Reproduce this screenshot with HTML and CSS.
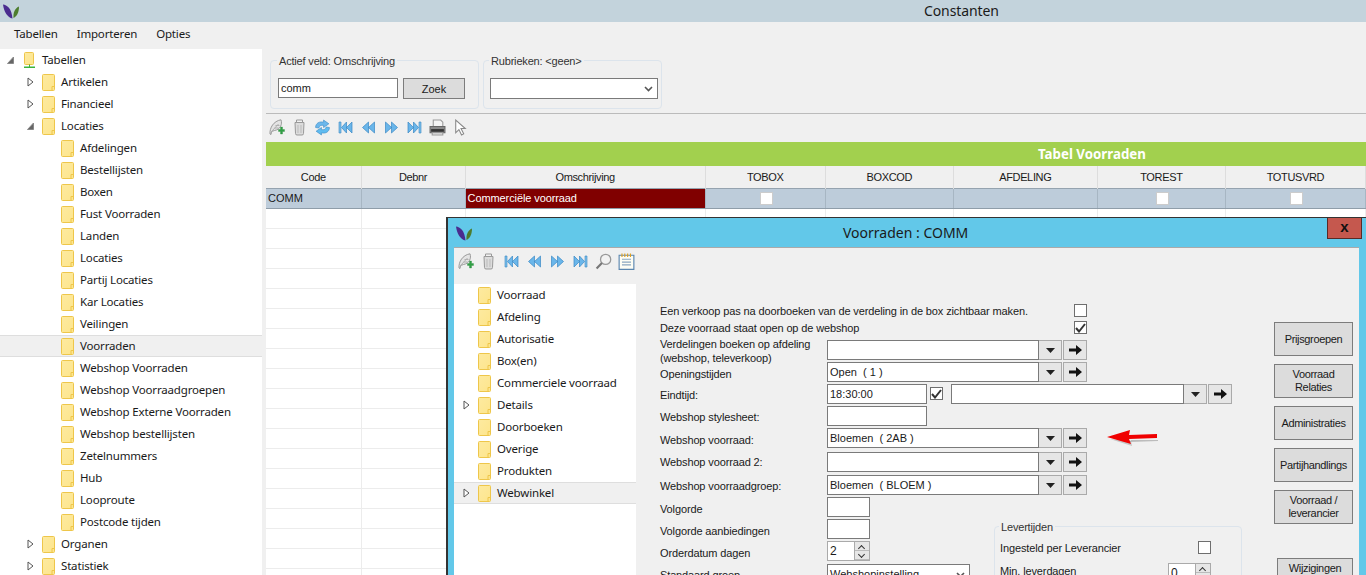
FILE: index.html
```html
<!DOCTYPE html>
<html lang="en">
<head>
    <meta charset="UTF-8">
    <meta name="viewport" content="width=device-width, initial-scale=1.0">
    <title>Constanten</title>
    <link rel="stylesheet" href="styles.css">
</head>
<body>
    <svg class="defs" width="0" height="0">
        <defs>
            <linearGradient id="folder-fill" x1="0" y1="0" x2="1" y2="1">
                <stop offset="0" stop-color="#fdeaa0"/>
                <stop offset="1" stop-color="#fde58c"/>
            </linearGradient>
            <symbol id="i-logo" viewBox="0 0 18 16">
                <path d="M1 1.500C5 2 9.500 5 10.500 15.500C5.500 14.500 2 9 1 1.500Z" fill="#4a2c8f"/>
                <path d="M17 3.500C17 9 15 13.500 11.500 15C11 10 12.500 5.500 17 3.500Z" fill="#4d7d2e"/>
            </symbol>
            <symbol id="i-folder" viewBox="0 0 13 17">
                <path d="M.5 1.500a1 1 0 0 1 1-1h10a1 1 0 0 1 1 1v14a1 1 0 0 1-1 1h-10a1 1 0 0 1-1-1z" fill="url(#folder-fill)" stroke="#eec64a"/>
                <path d="M10 16.500v-4h2.500" fill="none" stroke="#eec64a"/>
            </symbol>
            <symbol id="i-root" viewBox="0 0 13 17">
                <path d="M2.500 .5h7a1 1 0 0 1 1 1v10a1 1 0 0 1-1 1h-7a1 1 0 0 1-1-1v-10a1 1 0 0 1 1-1z" fill="url(#folder-fill)" stroke="#eec64a"/>
                <path d="M6 12.500h1v2h5v1.500h-11v-1.500h5z" fill="#3cb43c"/>
            </symbol>
            <symbol id="i-closed" viewBox="0 0 7 10">
                <path d="M1 1l5 4-5 4z" fill="#fff" stroke="#555"/>
            </symbol>
            <symbol id="i-open" viewBox="0 0 7 10">
                <path d="M6.500 2v6.500h-6z" fill="#666" stroke="#888"/>
            </symbol>
            <symbol id="i-quill" viewBox="0 0 16 17">
                <path d="M1.500 15C1 9 5 2 12.500 .8C14 5 12 10.500 6 11.500L3 12.500L2.500 15.500z" fill="#e4e4e4" stroke="#9a9a9a"/>
                <path d="M3 12.500L10 5M6 9h4M7 6.500h4" stroke="#b0b0b0" fill="none"/>
                <path d="M10 10.500h2v-2.500h2v2.500h2v2h-2v2.500h-2v-2.500h-2z" fill="#2fa044" stroke="#1d7a30" stroke-width=".3"/>
            </symbol>
            <symbol id="i-trash" viewBox="0 0 16 17">
                <path d="M3.500 3.500h9l-.5 11a1.500 1.500 0 0 1-1.500 1.500h-5a1.500 1.500 0 0 1-1.500-1.500z" fill="#dcdcdc" stroke="#999"/>
                <path d="M5 1h6v2.500h-6z" fill="#f2f2f2" stroke="#999"/>
                <path d="M6.500 6v8M9.500 6v8" stroke="#bbb"/>
            </symbol>
            <symbol id="i-refresh" viewBox="0 0 16 16">
                <path d="M1.500 8C1.500 4 5 2 9 3V1l5 3.500L9 8V6C6.500 5.500 5 6.500 4.500 8.500z" fill="#6cb8ec" stroke="#3d8cc8" stroke-width=".6"/>
                <path d="M14.500 8C14.500 12 11 14 7 13v2l-5-3.500L7 8v2C9.500 10.500 11 9.500 11.500 7.500z" fill="#5fbcf0" stroke="#3d8cc8" stroke-width=".6"/>
            </symbol>
            <symbol id="i-first" viewBox="0 0 14 13">
                <path d="M.5 1h2v11h-2z" fill="#7cc0ec" stroke="#3a88c4" stroke-width=".6"/>
                <path d="M8 1v11l-5-5.500zM13.500 1v11l-5.500-5.500z" fill="#6ab6ea" stroke="#3a88c4" stroke-width=".7"/>
            </symbol>
            <symbol id="i-prev" viewBox="0 0 14 13">
                <path d="M7 1v11L1 6.500zM13 1v11L7 6.500z" fill="#6ab6ea" stroke="#3a88c4" stroke-width=".7"/>
            </symbol>
            <symbol id="i-next" viewBox="0 0 14 13">
                <path d="M1 1v11l6-5.500zM7 1v11l6-5.500z" fill="#6ab6ea" stroke="#3a88c4" stroke-width=".7"/>
            </symbol>
            <symbol id="i-last" viewBox="0 0 14 13">
                <path d="M.5 1v11l5.500-5.500zM6 1v11l5-5.500z" fill="#6ab6ea" stroke="#3a88c4" stroke-width=".7"/>
                <path d="M11.500 1h2v11h-2z" fill="#7cc0ec" stroke="#3a88c4" stroke-width=".6"/>
            </symbol>
            <symbol id="i-print" viewBox="0 0 16 16">
                <path d="M4 1h7l2 2v4h-9z" fill="#f4f4f4" stroke="#999"/>
                <path d="M1 7h14v6h-14z" fill="#8a8a8a" stroke="#666"/>
                <path d="M2 9.500h12v2.500h-12z" fill="#333"/>
                <path d="M3 13h10v2h-10z" fill="#e4e4e4" stroke="#999"/>
            </symbol>
            <symbol id="i-cursor" viewBox="0 0 12 16">
                <path d="M1.500 1v12l3-3 2.500 5 2-1-2.500-5h4z" fill="#fff" stroke="#888"/>
            </symbol>
            <symbol id="i-search" viewBox="0 0 16 16">
                <circle cx="10" cy="6" r="4.800" fill="#f2f2f2" stroke="#999" stroke-width="1.200"/>
                <path d="M6.500 9.500L1.500 14.500" stroke="#777" stroke-width="2"/>
            </symbol>
            <symbol id="i-notes" viewBox="0 0 14 15">
                <path d="M.5 2h13v12.500h-13z" fill="#fdfdf4" stroke="#5a86b0"/>
                <path d="M3 5.500h8M3 8h8M3 10.500h8" stroke="#8aa6c0"/>
                <path d="M3 .5v3M5.500 .5v3M8 .5v3M10.500 .5v3" stroke="#e0a020"/>
            </symbol>
            <symbol id="i-drop" viewBox="0 0 9 5">
                <path d="M0 0h9L4.500 5z" fill="#222"/>
            </symbol>
            <symbol id="i-go" viewBox="0 0 13 10">
                <path d="M0 3.500h7V0l6 5-6 5V6.500H0z" fill="#111"/>
            </symbol>
            <symbol id="i-chev" viewBox="0 0 9 6">
                <path d="M1 1l3.500 3.500L8 1" fill="none" stroke="#555" stroke-width="1.600"/>
            </symbol>
            <symbol id="i-tick" viewBox="0 0 11 10">
                <path d="M1 5l3 3.500L10 1" fill="none" stroke="#333" stroke-width="2"/>
            </symbol>
        </defs>
    </svg>

    <div class="app">
        <header class="titlebar">
            <svg class="logo"><use href="#i-logo"/></svg>
            <span class="titlebar-text">Constanten</span>
        </header>
        <nav class="menubar">
            <a>Tabellen</a>
            <a>Importeren</a>
            <a>Opties</a>
        </nav>

        <div class="main">
            <ul class="tree">
                <li class="node lvl-0"><svg class="exp"><use href="#i-open"/></svg><svg class="folder"><use href="#i-root"/></svg>Tabellen</li>
                <li class="node lvl-1"><svg class="exp"><use href="#i-closed"/></svg><svg class="folder"><use href="#i-folder"/></svg>Artikelen</li>
                <li class="node lvl-1"><svg class="exp"><use href="#i-closed"/></svg><svg class="folder"><use href="#i-folder"/></svg>Financieel</li>
                <li class="node lvl-1"><svg class="exp"><use href="#i-open"/></svg><svg class="folder"><use href="#i-folder"/></svg>Locaties</li>
                <li class="node lvl-2"><svg class="folder"><use href="#i-folder"/></svg>Afdelingen</li>
                <li class="node lvl-2"><svg class="folder"><use href="#i-folder"/></svg>Bestellijsten</li>
                <li class="node lvl-2"><svg class="folder"><use href="#i-folder"/></svg>Boxen</li>
                <li class="node lvl-2"><svg class="folder"><use href="#i-folder"/></svg>Fust Voorraden</li>
                <li class="node lvl-2"><svg class="folder"><use href="#i-folder"/></svg>Landen</li>
                <li class="node lvl-2"><svg class="folder"><use href="#i-folder"/></svg>Locaties</li>
                <li class="node lvl-2"><svg class="folder"><use href="#i-folder"/></svg>Partij Locaties</li>
                <li class="node lvl-2"><svg class="folder"><use href="#i-folder"/></svg>Kar Locaties</li>
                <li class="node lvl-2"><svg class="folder"><use href="#i-folder"/></svg>Veilingen</li>
                <li class="node lvl-2 selected"><svg class="folder"><use href="#i-folder"/></svg>Voorraden</li>
                <li class="node lvl-2"><svg class="folder"><use href="#i-folder"/></svg>Webshop Voorraden</li>
                <li class="node lvl-2"><svg class="folder"><use href="#i-folder"/></svg>Webshop Voorraadgroepen</li>
                <li class="node lvl-2"><svg class="folder"><use href="#i-folder"/></svg>Webshop Externe Voorraden</li>
                <li class="node lvl-2"><svg class="folder"><use href="#i-folder"/></svg>Webshop bestellijsten</li>
                <li class="node lvl-2"><svg class="folder"><use href="#i-folder"/></svg>Zetelnummers</li>
                <li class="node lvl-2"><svg class="folder"><use href="#i-folder"/></svg>Hub</li>
                <li class="node lvl-2"><svg class="folder"><use href="#i-folder"/></svg>Looproute</li>
                <li class="node lvl-2"><svg class="folder"><use href="#i-folder"/></svg>Postcode tijden</li>
                <li class="node lvl-1"><svg class="exp"><use href="#i-closed"/></svg><svg class="folder"><use href="#i-folder"/></svg>Organen</li>
                <li class="node lvl-1"><svg class="exp"><use href="#i-closed"/></svg><svg class="folder"><use href="#i-folder"/></svg>Statistiek</li>
            </ul>

            <section class="content">
                <div class="filters">
                    <fieldset class="group group-search">
                        <legend>Actief veld: Omschrijving</legend>
                        <div class="field-text search-input">comm</div>
                        <button class="btn zoek">Zoek</button>
                    </fieldset>
                    <fieldset class="group group-rubriek">
                        <legend>Rubrieken: &lt;geen&gt;</legend>
                        <div class="field-text select"><svg class="chev"><use href="#i-chev"/></svg></div>
                    </fieldset>
                </div>

                <div class="toolbar main-toolbar">
                    <svg class="tool"><use href="#i-quill"/></svg>
                    <svg class="tool"><use href="#i-trash"/></svg>
                    <svg class="tool"><use href="#i-refresh"/></svg>
                    <svg class="tool nav"><use href="#i-first"/></svg>
                    <svg class="tool nav"><use href="#i-prev"/></svg>
                    <svg class="tool nav"><use href="#i-next"/></svg>
                    <svg class="tool nav"><use href="#i-last"/></svg>
                    <svg class="tool"><use href="#i-print"/></svg>
                    <svg class="tool"><use href="#i-cursor"/></svg>
                </div>

                <div class="band">Tabel Voorraden</div>

                <table class="grid">
                    <colgroup>
                        <col class="c-95"><col class="c-104"><col class="c-240"><col class="c-120"><col class="c-128"><col class="c-144"><col class="c-128"><col class="c-140">
                    </colgroup>
                    <thead>
                        <tr><th>Code</th><th>Debnr</th><th>Omschrijving</th><th>TOBOX</th><th>BOXCOD</th><th>AFDELING</th><th>TOREST</th><th>TOTUSVRD</th></tr>
                    </thead>
                    <tbody>
                        <tr class="current">
                            <td>COMM</td><td></td><td class="active-cell">Commerciële voorraad</td>
                            <td><span class="cell-check"></span></td><td></td><td></td>
                            <td><span class="cell-check"></span></td><td><span class="cell-check"></span></td>
                        </tr>
                        <tr><td></td><td></td><td></td><td></td><td></td><td></td><td></td><td></td></tr>
                        <tr><td></td><td></td></tr>
                        <tr><td></td><td></td></tr>
                        <tr><td></td><td></td></tr>
                        <tr><td></td><td></td></tr>
                        <tr><td></td><td></td></tr>
                        <tr><td></td><td></td></tr>
                        <tr><td></td><td></td></tr>
                        <tr><td></td><td></td></tr>
                        <tr><td></td><td></td></tr>
                        <tr><td></td><td></td></tr>
                        <tr><td></td><td></td></tr>
                        <tr><td></td><td></td></tr>
                        <tr><td></td><td></td></tr>
                        <tr><td></td><td></td></tr>
                        <tr><td></td><td></td></tr>
                        <tr><td></td><td></td></tr>
                        <tr><td></td><td></td></tr>
                        <tr><td></td><td></td></tr>
                    </tbody>
                </table>
            </section>
        </div>

        <div class="dialog">
            <div class="dialog-title">
                <svg class="logo"><use href="#i-logo"/></svg>
                <span class="dialog-title-text">Voorraden : COMM</span>
                <button class="close">x</button>
            </div>
            <div class="dialog-panel">
                <div class="toolbar dialog-toolbar">
                    <svg class="tool"><use href="#i-quill"/></svg>
                    <svg class="tool"><use href="#i-trash"/></svg>
                    <svg class="tool nav"><use href="#i-first"/></svg>
                    <svg class="tool nav"><use href="#i-prev"/></svg>
                    <svg class="tool nav"><use href="#i-next"/></svg>
                    <svg class="tool nav"><use href="#i-last"/></svg>
                    <svg class="tool"><use href="#i-search"/></svg>
                    <svg class="tool"><use href="#i-notes"/></svg>
                </div>
                <div class="dialog-body">
                    <ul class="tree dialog-tree">
                        <li class="node"><svg class="folder"><use href="#i-folder"/></svg>Voorraad</li>
                        <li class="node"><svg class="folder"><use href="#i-folder"/></svg>Afdeling</li>
                        <li class="node"><svg class="folder"><use href="#i-folder"/></svg>Autorisatie</li>
                        <li class="node"><svg class="folder"><use href="#i-folder"/></svg>Box(en)</li>
                        <li class="node"><svg class="folder"><use href="#i-folder"/></svg>Commerciele voorraad</li>
                        <li class="node"><svg class="exp"><use href="#i-closed"/></svg><svg class="folder"><use href="#i-folder"/></svg>Details</li>
                        <li class="node"><svg class="folder"><use href="#i-folder"/></svg>Doorboeken</li>
                        <li class="node"><svg class="folder"><use href="#i-folder"/></svg>Overige</li>
                        <li class="node"><svg class="folder"><use href="#i-folder"/></svg>Produkten</li>
                        <li class="node selected"><svg class="exp"><use href="#i-closed"/></svg><svg class="folder"><use href="#i-folder"/></svg>Webwinkel</li>
                    </ul>

                    <div class="form">
                        <div class="form-top">
                            <label class="wide">Een verkoop pas na doorboeken van de verdeling in de box zichtbaar maken.</label>
                            <div class="check-end"><span class="check"></span></div>

                            <label class="wide">Deze voorraad staat open op de webshop</label>
                            <div class="check-end"><span class="check"><svg><use href="#i-tick"/></svg></span></div>

                            <label>Verdelingen boeken op afdeling<br>(webshop, televerkoop)</label>
                            <div class="lookup"><div class="field-text"></div><span class="lk-btn"><svg class="drop"><use href="#i-drop"/></svg></span><span class="lk-btn go"><svg class="arrow"><use href="#i-go"/></svg></span></div>

                            <label class="lbl-down">Openingstijden</label>
                            <div class="lookup"><div class="field-text">Open&nbsp; ( 1 )</div><span class="lk-btn"><svg class="drop"><use href="#i-drop"/></svg></span><span class="lk-btn go"><svg class="arrow"><use href="#i-go"/></svg></span></div>

                            <label>Eindtijd:</label>
                            <div class="lookup">
                                <div class="field-text short">18:30:00</div>
                                <span class="check inline-check"><svg><use href="#i-tick"/></svg></span>
                                <div class="field-text mid"></div><span class="lk-btn"><svg class="drop"><use href="#i-drop"/></svg></span><span class="lk-btn go"><svg class="arrow"><use href="#i-go"/></svg></span>
                            </div>

                            <label>Webshop stylesheet:</label>
                            <div class="lookup"><div class="field-text short"></div></div>

                            <label>Webshop voorraad:</label>
                            <div class="lookup"><div class="field-text">Bloemen&nbsp; ( 2AB )</div><span class="lk-btn"><svg class="drop"><use href="#i-drop"/></svg></span><span class="lk-btn go"><svg class="arrow"><use href="#i-go"/></svg></span></div>

                            <label class="lbl-up">Webshop voorraad 2:</label>
                            <div class="lookup"><div class="field-text"></div><span class="lk-btn"><svg class="drop"><use href="#i-drop"/></svg></span><span class="lk-btn go"><svg class="arrow"><use href="#i-go"/></svg></span></div>

                            <label>Webshop voorraadgroep:</label>
                            <div class="lookup"><div class="field-text">Bloemen&nbsp; ( BLOEM )</div><span class="lk-btn"><svg class="drop"><use href="#i-drop"/></svg></span><span class="lk-btn go"><svg class="arrow"><use href="#i-go"/></svg></span></div>
                        </div>

                        <div class="form-bottom">
                            <div class="form-left">
                                <label class="lbl-down">Volgorde</label>
                                <div class="lookup"><div class="field-text tiny"></div></div>

                                <label class="lbl-down">Volgorde aanbiedingen</label>
                                <div class="lookup"><div class="field-text tiny"></div></div>

                                <label>Orderdatum dagen</label>
                                <div class="lookup"><div class="spin"><span class="spin-value">2</span><span class="spin-btns"><i class="up"></i><i class="down"></i></span></div></div>

                                <label>Standaard groep</label>
                                <div class="lookup"><div class="field-text select-small">Webshopinstelling<svg class="chev"><use href="#i-chev"/></svg></div></div>
                            </div>

                            <fieldset class="group levertijden">
                                <legend>Levertijden</legend>
                                <div class="lever-row"><span>Ingesteld per Leverancier</span><span class="check"></span></div>
                                <div class="lever-row"><span>Min. leverdagen</span><div class="spin lever-spin"><span class="spin-value">0</span><span class="spin-btns"><i class="up"></i><i class="down"></i></span></div></div>
                            </fieldset>
                        </div>
                    </div>

                    <aside class="side">
                        <button class="btn">Prijsgroepen</button>
                        <button class="btn">Voorraad<br>Relaties</button>
                        <button class="btn">Administraties</button>
                        <button class="btn">Partijhandlings</button>
                        <button class="btn">Voorraad /<br>leverancier</button>
                        <button class="btn wijzigingen">Wijzigingen</button>
                    </aside>
                </div>
            </div>

            <svg class="red-arrow" width="56" height="20" viewBox="0 0 56 20">
                <path d="M24 11L23 13L51 12L51 11z" fill="#888" opacity=".5" transform="translate(1 1)"/>
                <path d="M3 10L25 17L24 12z" fill="#888" opacity=".4" transform="translate(1 1)"/>
                <path d="M1 9L24 2L23 7L51 6L51 10L23 11L25 16z" fill="#f00000"/>
            </svg>
        </div>
    </div>
</body>
</html>
```

FILE: styles.css
```css
* {
    box-sizing: border-box;
}
html, body {
    margin: 0;
    height: 100%;
    overflow: hidden;
}
body {
    font-family: "Liberation Sans", Arial, sans-serif;
    font-size: 11px;
    color: #1a1a1a;
    background-color: #f0f0f0;
}
ul {
    list-style: none;
    margin: 0;
    padding: 0;
}
.defs {
    position: absolute;
}
.app {
    position: relative;
    width: 1366px;
    height: 575px;
    overflow: hidden;
    display: flex;
    flex-direction: column;
}

/* title + menu */
.titlebar {
    flex: none;
    height: 22px;
    background-color: #c3d3dc;
    display: flex;
    align-items: center;
    padding-left: 2px;
}
.logo {
    width: 18px;
    height: 16px;
    flex: none;
}
.titlebar-text {
    margin-left: 904px;
    font-family: "Noto Sans", Arial, sans-serif;
    font-size: 14px;
    line-height: 22px;
    letter-spacing: -.1px;
}
.menubar {
    flex: none;
    height: 27px;
    display: flex;
    align-items: center;
    gap: 19px;
    padding: 0 0 4px 14px;
    font-family: "Noto Sans", Arial, sans-serif;
    font-size: 11.5px;
    letter-spacing: -.17px;
}

/* tree */
.main {
    flex: 1;
    display: flex;
    min-height: 0;
}
.tree {
    flex: none;
    width: 262px;
    background-color: white;
    overflow: hidden;
    font-family: "Noto Sans", Arial, sans-serif;
    font-size: 11.5px;
    letter-spacing: -.17px;
}
.node {
    height: 22px;
    display: flex;
    align-items: center;
    white-space: nowrap;
    position: relative;
    padding-bottom: 2px;
}
.node.selected {
    background-color: #f0f0f0;
    border-top: 1px solid #dedede;
    border-bottom: 1px solid #dedede;
}
.folder {
    width: 13px;
    height: 17px;
    flex: none;
    margin-right: 6px;
    position: relative;
    top: 1px;
}
.exp {
    width: 7px;
    height: 10px;
    position: absolute;
    margin-top: 2px;
}
.lvl-0 { padding-left: 23px; }
.lvl-0 .exp { left: 7px; }
.lvl-1 { padding-left: 42px; }
.lvl-1 .exp { left: 27px; }
.lvl-2 { padding-left: 61px; }

/* search filters */
.content {
    flex: 1;
    min-width: 0;
    overflow: hidden;
    padding-left: 4px;
}
.filters {
    display: flex;
    gap: 4px;
    height: 65px;
    padding-left: 4px;
    border-bottom: 1px solid #bbb;
}
.group {
    margin: 4px 0 0;
    padding: 0;
    border: 1px solid #dce4ec;
    border-radius: 4px;
    height: 56px;
    position: relative;
}
.group legend {
    margin-left: -1px;
    padding: 0 2px;
    line-height: 14px;
    color: #333;
    position: relative;
    top: 1px;
    letter-spacing: -.18px;
}
.group-search {
    width: 209px;
    display: flex;
    padding: 11px 0 0 7px;
}
.group-rubriek {
    width: 179px;
    padding: 11px 0 0 6px;
}
.field-text {
    height: 20px;
    width: 212px;
    background-color: white;
    border: 1px solid #7a7a7a;
    line-height: 18px;
    padding-left: 2px;
    white-space: nowrap;
    position: relative;
    flex: none;
}
.search-input {
    width: 120px;
}
.select {
    width: 168px;
    height: 21px;
}
.chev {
    position: absolute;
    right: 4px;
    top: 7px;
    width: 9px;
    height: 6px;
}
.btn {
    font: inherit;
    color: #1a1a1a;
    background-color: #dcdcdc;
    border: 1px solid #7c7c7c;
    padding: 0;
}
.zoek {
    width: 62px;
    height: 21px;
    margin-left: 5px;
}

/* toolbars */
.toolbar {
    display: flex;
    align-items: center;
}
.main-toolbar {
    height: 28px;
    padding-bottom: 2px;
    margin-left: -1px;
}
.tool {
    width: 23px;
    height: 17px;
    flex: none;
}
.tool.nav {
    height: 13px;
}

/* data grid */
.band {
    width: 1300px;
    height: 24px;
    line-height: 24px;
    padding-left: 772px;
    background-color: #a2d04e;
    color: white;
    font-family: "Noto Sans", Arial, sans-serif;
    font-size: 13.300px;
    font-weight: bold;
    white-space: nowrap;
}
.grid {
    border-collapse: collapse;
    table-layout: fixed;
    width: 1100px;
}
.c-95 { width: 95px; }
.c-104 { width: 104px; }
.c-240 { width: 240px; }
.c-120 { width: 120px; }
.c-128 { width: 128px; }
.c-144 { width: 144px; }
.c-140 { width: 140px; }
.grid th {
    height: 22px;
    font-weight: normal;
    letter-spacing: -.35px;
    background-color: #f0f0f0;
    border-right: 1px solid #ddd;
    padding: 0;
}
.grid td {
    height: 20px;
    background-color: white;
    border-right: 1px solid #ececec;
    border-bottom: 1px solid #ececec;
    padding: 0 0 0 2px;
    white-space: nowrap;
}
.grid .current td {
    background-color: #bdccda;
    border-top: 1px solid #95a3af;
    border-bottom: 1px solid #8f9da9;
    border-right: 1px solid #a7b6c3;
    text-align: center;
}
.grid .current td:first-child,
.grid .current .active-cell {
    text-align: left;
}
.grid .current .active-cell {
    background-color: #800000;
    color: white;
    letter-spacing: -.1px;
}
.cell-check {
    display: block;
    width: 13px;
    height: 13px;
    margin: 0 auto;
    background-color: white;
    border: 1px solid #ccc;
}

/* dialog window */
.dialog {
    position: absolute;
    left: 446px;
    top: 217px;
    width: 930px;
    height: 400px;
    background-color: #62c8e9;
    border: 1px solid #333;
    border-width: 1px 0 0 2px;
    padding: 0 0 0 6px;
}
.dialog-title {
    height: 29px;
    display: flex;
    align-items: center;
    position: relative;
}
.dialog-title-text {
    position: absolute;
    left: 389px;
    top: 5px;
    font-family: "Noto Sans", Arial, sans-serif;
    font-size: 14px;
    line-height: 20px;
}
.dialog-title .logo {
    margin-left: 1px;
}
.close {
    position: absolute;
    left: 873px;
    top: 0;
    width: 35px;
    height: 21px;
    padding: 0 0 4px;
    background-color: #c5584e;
    border: 1px solid #5a2a26;
    border-top: 0;
    font: bold 15px "Liberation Sans", Arial, sans-serif;
    color: #111;
}
.dialog-panel {
    width: 905px;
    height: 360px;
    background-color: #f0f0f0;
    border-top: 1px solid #aaa;
}
.dialog-toolbar {
    height: 36px;
    padding-bottom: 10px;
}
.dialog-body {
    display: flex;
}
.dialog-tree {
    width: 182px;
    height: 300px;
}
.dialog-tree .node {
    padding-left: 24px;
}
.dialog-tree .exp {
    left: 9px;
}

/* form */
.form {
    flex: none;
    width: 610px;
    height: 300px;
    margin-left: 24px;
    padding-top: 20px;
}
.form-top {
    display: grid;
    grid-template-columns: 167px 1fr;
    grid-template-rows: 17px 19px 22px 22px 22px 22px 24px 23px 22px;
}
.form-bottom {
    display: flex;
}
.form-left {
    display: grid;
    grid-template-columns: 167px 143px;
    grid-template-rows: 22px 22px 23px 22px;
    flex: none;
}
.form label {
    align-self: center;
    white-space: nowrap;
    line-height: 14px;
    letter-spacing: -.13px;
}
.form .wide {
    width: 160px;
    align-self: start;
}
.form .lbl-down {
    padding-top: 2px;
}
.form .lbl-up {
    padding-bottom: 3px;
}
.check-end {
    padding-left: 247px;
}
.check {
    display: inline-block;
    width: 13px;
    height: 13px;
    background-color: white;
    border: 1px solid #6e6e6e;
    flex: none;
    position: relative;
}
.check svg {
    position: absolute;
    left: 0;
    top: 1px;
    width: 11px;
    height: 10px;
}
.lookup {
    display: flex;
    height: 20px;
}
.lk-btn {
    width: 23px;
    height: 20px;
    background-color: #e6e6e6;
    border: 1px solid #aaa;
    border-left: 0;
    display: flex;
    align-items: center;
    justify-content: center;
    flex: none;
}
.lk-btn.go {
    width: 24px;
    margin-left: 1px;
    border-left: 1px solid #aaa;
}
.drop {
    width: 9px;
    height: 5px;
}
.arrow {
    width: 13px;
    height: 10px;
}
.short {
    width: 100px;
}
.mid {
    width: 233px;
    margin-left: 8px;
}
.inline-check {
    margin: 3px 0 0 3px;
}
.tiny {
    width: 43px;
}
.spin {
    width: 43px;
    height: 20px;
    background-color: white;
    border: 1px solid #aaa;
    display: flex;
    justify-content: space-between;
    flex: none;
}
.spin-value {
    padding-left: 2px;
    line-height: 18px;
    font-size: 12px;
}
.spin-btns {
    width: 15px;
    display: flex;
    flex-direction: column;
    background-color: #e6e6e6;
    border-left: 1px solid #aaa;
}
.spin-btns i {
    flex: 1;
    position: relative;
    border-bottom: 1px solid #bbb;
}
.spin-btns i::after {
    content: "";
    position: absolute;
    left: 4px;
    width: 4px;
    height: 4px;
    border-left: 1px solid #333;
    border-top: 1px solid #333;
}
.spin-btns .up::after {
    top: 4px;
    transform: rotate(45deg);
}
.spin-btns .down::after {
    top: 1px;
    transform: rotate(225deg);
}
.select-small {
    width: 143px;
}
.levertijden {
    flex: none;
    width: 248px;
    height: 90px;
    margin: 22px 0 0 24px;
    padding: 3px 30px 0 5px;
    letter-spacing: -.13px;
}
.lever-row {
    display: flex;
    justify-content: space-between;
    align-items: center;
    height: 23px;
}
.lever-spin {
    margin-top: 5px;
}

/* side buttons */
.side {
    flex: none;
    width: 79px;
    margin-left: 4px;
    padding-top: 38px;
    display: flex;
    flex-direction: column;
    gap: 8px;
}
.side .btn {
    height: 34px;
    line-height: 13px;
    letter-spacing: -.35px;
    flex: none;
}
.side .wijzigingen {
    height: 20px;
    margin-top: 26px;
    margin-left: 3px;
    width: 76px;
}

.red-arrow {
    position: absolute;
    left: 658px;
    top: 210px;
}
```
